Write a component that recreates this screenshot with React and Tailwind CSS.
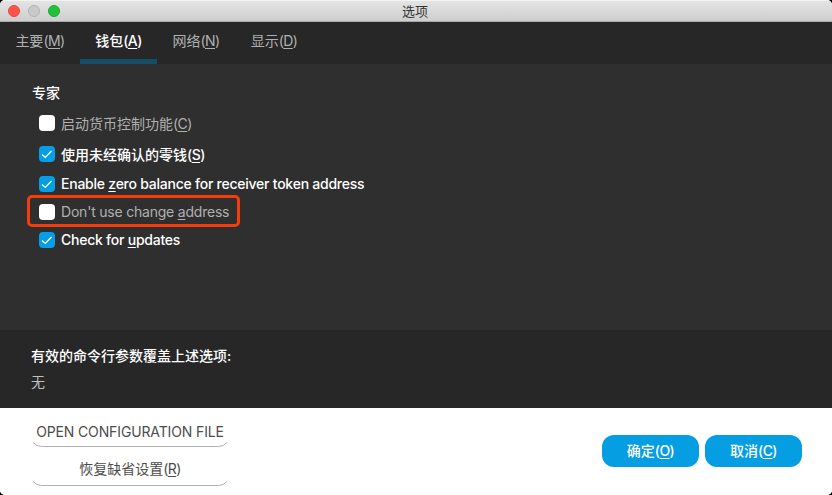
import React from "react";

function Key({ children }) {
  return (
    <span className="underline decoration-1 underline-offset-[2px] [text-decoration-skip-ink:none]">
      {children}
    </span>
  );
}

function Hotkey({ children }) {
  return (
    <span className="tracking-[-0.55px]">
      (<Key>{children}</Key>)
    </span>
  );
}

function Tab({ label, hotkey, active, className }) {
  return (
    <button
      className={`flex h-[42px] items-start justify-center border-b-[5px] pt-[9px] leading-5 ${
        active ? "border-[#164e69] font-medium text-white" : "border-transparent text-[#b0b0b0]"
      } ${className}`}
    >
      <span>
        {label}
        <Hotkey>{hotkey}</Hotkey>
      </span>
    </button>
  );
}

function Check({ checked, className = "", boxClass = "", textClass = "", highlighted, children }) {
  return (
    <label className={`relative flex items-center ${className}`}>
      {highlighted && (
        <span className="absolute -left-[12px] -top-[3px] h-[32px] w-[213px] rounded-[5px] border-[3px] border-[#f43c0c]" />
      )}
      <span
        className={`flex h-4 w-4 shrink-0 items-center justify-center rounded-[4px] ${
          checked ? "bg-[#069ee6]" : "bg-white"
        } ${boxClass}`}
      >
        {checked && (
          <svg width="16" height="16" viewBox="0 0 16 16" fill="none">
            <path d="M3 8.500l3.300 3 6.200-6.500" stroke="#fff" strokeWidth="1.2" />
          </svg>
        )}
      </span>
      <span
        className={`ml-[6px] whitespace-nowrap ${
          checked ? "font-medium text-white" : "text-[#b0b0b0]"
        } ${textClass}`}
      >
        {children}
      </span>
    </label>
  );
}

function OutlineButton({ children, className = "" }) {
  return (
    <button
      className={`flex w-[196px] items-center justify-center whitespace-nowrap text-[#4c4c4c] ${className}`}
    >
      {children}
    </button>
  );
}

function Curve() {
  return (
    <svg className="block" width="196" height="6" viewBox="0 0 196 6" fill="none">
      <path d="M1 .5Q4.500 4.500 9.500 4.500H186.500Q191.500 4.500 195 .5" stroke="#b0b0b0" />
    </svg>
  );
}

export default function App() {
  return (
    <div className="h-[495px] w-[832px] overflow-hidden bg-black font-['Inter','Noto_Sans_CJK_SC',sans-serif] text-[14px] leading-5">
      <div className="flex h-full flex-col overflow-hidden rounded-[5px] bg-white">
        <header className="grid h-[22px] shrink-0 grid-cols-[1fr_auto_1fr] items-center border-b border-t border-b-[#a9a9a9] border-t-[#f3f3f3] bg-linear-to-b from-[#e4e4e4] to-[#cecece] px-2">
          <div className="flex gap-2">
            <span className="h-3 w-3 rounded-full border border-[#e9473f] bg-[#ff544d]" />
            <span className="h-3 w-3 rounded-full border border-[#b3b3b3] bg-[#c9c9c9]" />
            <span className="h-3 w-3 rounded-full border border-[#18ad2b] bg-[#24c138]" />
          </div>
          <h1 className="pr-[2px] text-[13px] leading-5 text-[#333]">选项</h1>
        </header>

        <nav className="flex h-[42px] shrink-0 bg-[#272727]">
          <Tab label="主要" hotkey="M" className="w-[80px]" />
          <Tab label="钱包" hotkey="A" active className="w-[77px]" />
          <Tab label="网络" hotkey="N" className="w-[78px]" />
          <Tab label="显示" hotkey="D" className="w-[78px]" />
        </nav>

        <main className="h-[266px] shrink-0 bg-[#2f2f2f] pl-[32px] pt-[19px]">
          <h2 className="font-medium text-white">专家</h2>
          <div className="flex flex-col pl-[7px] pt-[5px]">
            <Check className="h-[31px]" boxClass="mb-[2px]">
              启动货币控制功能<Hotkey>C</Hotkey>
            </Check>
            <Check checked className="h-[31px]" boxClass="mb-[2px]">
              使用未经确认的零钱<Hotkey>S</Hotkey>
            </Check>
            <Check checked className="h-7" textClass="tracking-[-0.24px]">
              Enable <Key>z</Key>ero balance for receiver token address
            </Check>
            <Check highlighted className="h-7" textClass="tracking-[-0.21px]">
              Don't use change <Key>a</Key>ddress
            </Check>
            <Check checked className="h-7" textClass="tracking-[-0.24px]">
              Check for <Key>u</Key>pdates
            </Check>
          </div>
        </main>

        <section className="h-[78px] shrink-0 bg-[#272727] pl-[31px] pt-[16px]">
          <p className="font-medium text-white">有效的命令行参数覆盖上述选项:</p>
          <p className="mt-[6px] text-[#c0c0c0]">无</p>
        </section>

        <footer className="flex flex-1 items-start justify-between bg-white pl-8 pr-[30px]">
          <div className="flex flex-col">
            <OutlineButton className="mt-[14px] h-5 tracking-[-0.13px]">
              OPEN CONFIGURATION FILE
            </OutlineButton>
            <Curve />
            <OutlineButton className="mt-[11px] h-5">
              <span>
                恢复缺省设置<Hotkey>R</Hotkey>
              </span>
            </OutlineButton>
            <div className="mt-[2px]">
              <Curve />
            </div>
          </div>
          <div className="flex gap-[6px] pt-[27px]">
            <button className="h-8 w-[97px] rounded-[12px] bg-[#069ee2] font-medium text-white">
              确定<Hotkey>O</Hotkey>
            </button>
            <button className="h-8 w-[97px] rounded-[12px] bg-[#069ee2] font-medium text-white">
              取消<Hotkey>C</Hotkey>
            </button>
          </div>
        </footer>
      </div>
    </div>
  );
}
